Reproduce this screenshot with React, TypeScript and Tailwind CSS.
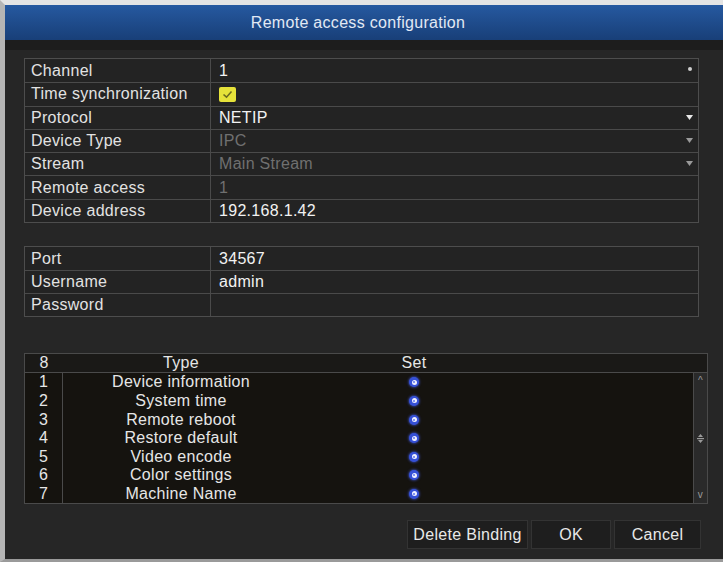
import React from 'react';

type Row = { label: string; value: string; dim?: boolean; arrow?: 'dot' | 'tri'; check?: boolean };

const mainRows: Row[] = [
  { label: 'Channel', value: '1', arrow: 'dot' },
  { label: 'Time synchronization', value: '', check: true },
  { label: 'Protocol', value: 'NETIP', arrow: 'tri' },
  { label: 'Device Type', value: 'IPC', dim: true, arrow: 'tri' },
  { label: 'Stream', value: 'Main Stream', dim: true, arrow: 'tri' },
  { label: 'Remote access', value: '1', dim: true },
  { label: 'Device address', value: '192.168.1.42' },
];

const loginRows: Row[] = [
  { label: 'Port', value: '34567' },
  { label: 'Username', value: 'admin' },
  { label: 'Password', value: '' },
];

const items = [
  'Device information',
  'System time',
  'Remote reboot',
  'Restore default',
  'Video encode',
  'Color settings',
  'Machine Name',
];

const Check = () => (
  <span className="flex h-[15px] w-[17px] items-center justify-center rounded-[2px] bg-[#e6e23a]">
    <svg width="11" height="9" viewBox="0 0 11 9">
      <path d="M1.5 4.5 L4.5 7.2 L9.5 1.5" stroke="#6b6a20" strokeWidth="1.6" fill="none" />
    </svg>
  </span>
);

const FieldTable = ({ rows, rowH }: { rows: Row[]; rowH: string }) => (
  <div className="mx-[24px] border border-[#4d4d4d] bg-[#232323]">
    {rows.map((r, i) => (
      <div
        key={r.label}
        className={`flex items-center ${rowH} ${i > 0 ? 'border-t border-[#4a4a4a]' : ''}`}
      >
        <div className="flex h-full w-[186px] items-center border-r border-[#4a4a4a] pl-[6px] text-[#e2e2e2]">
          {r.label}
        </div>
        <div className="relative flex h-full flex-1 items-center pl-[8px]">
          {r.check ? (
            <Check />
          ) : (
            <span className={r.dim ? 'text-[#707070]' : 'text-[#f2f2f2]'}>{r.value}</span>
          )}
          {r.arrow === 'dot' && (
            <span className="absolute right-[6px] top-[8px] h-[4px] w-[4px] rounded-full bg-[#cfcfcf]" />
          )}
          {r.arrow === 'tri' && (
            <svg className="absolute right-[5px] top-[8px]" width="7" height="6" viewBox="0 0 7 6">
              <path d="M0 0 L7 0 L3.5 5 Z" fill={r.dim ? '#9a9a9a' : '#e8e8e8'} />
            </svg>
          )}
        </div>
      </div>
    ))}
  </div>
);

const SetIcon = () => (
  <span className="flex h-[10px] w-[10px] items-center justify-center rounded-full bg-[#3550d6] shadow-[0_0_3px_#4a66ff]">
    <span className="flex h-[5px] w-[5px] items-center justify-center rounded-full bg-[#eef0ff]">
      <span className="h-[2px] w-[2px] rounded-full bg-[#6077f0]" />
    </span>
  </span>
);

const btn = 'h-[29px] border border-[#333] bg-[#1e1e1e] text-[16px] tracking-[0.3px] text-[#e8e8e8]';

const App: React.FC = () => {
  return (
    <div
      className="flex h-[562px] w-[723px] flex-col border-t-[5px] border-b-[3px] border-l-[5px] border-t-[#e4e4e4] border-b-[#9a9a9a] border-l-[#b5b5b5] bg-[#262626] text-[16px] tracking-[0.3px]"
      style={{ fontFamily: '"Liberation Sans", Arial, sans-serif' }}
    >
      <div className="flex h-[35px] items-center justify-center pr-[12px] bg-gradient-to-b from-[#2659a0] to-[#183f78] text-[16px] text-[#e2e9f4]">
        Remote access configuration
      </div>
      <div className="h-[10px] bg-[#1d1d1d]" />

      <div className="mt-[8px] -ml-[5px]">
        <FieldTable rows={mainRows} rowH="h-[23.3px]" />
      </div>

      <div className="mt-[23px] -ml-[5px]">
        <FieldTable rows={loginRows} rowH="h-[23px]" />
      </div>

      <div className="mx-[19px] mt-[36px] mr-[15px] border border-[#4a4a4a] bg-[#15130f] text-[#e6e6e6]">
        <div className="flex h-[19px] items-center border-b border-[#4a4a4a] bg-[#1a1917]">
          <div className="w-[38px] text-center">8</div>
          <div className="w-[236px] text-center">Type</div>
          <div className="w-[230px] text-center">Set</div>
        </div>
        <div className="flex">
          <div className="flex-1">
            {items.map((t, i) => (
              <div key={t} className="flex h-[18.6px] items-center">
                <div className="flex h-full w-[38px] items-center justify-center border-r border-[#4a4a4a]">
                  {i + 1}
                </div>
                <div className="w-[236px] text-center">{t}</div>
                <div className="flex w-[230px] justify-center">
                  <SetIcon />
                </div>
              </div>
            ))}
          </div>
          <div className="flex w-[14px] flex-col items-center justify-between border-l border-[#4a4a4a] bg-[#2a2a2a] py-[2px] text-[10px] text-[#9a9a9a]">
            <span className="leading-[12px]">^</span>
            <svg width="9" height="9" viewBox="0 0 9 9">
              <path d="M4.5 0 L7 3 L2 3 Z M2 6 L7 6 L4.5 9 Z" fill="#9a9a9a" />
              <rect x="1" y="4" width="7" height="1.2" fill="#9a9a9a" />
            </svg>
            <span className="leading-[12px]">v</span>
          </div>
        </div>
      </div>

      <div className="mt-[16px] flex justify-end gap-[3px] pr-[22px]">
        <button className={`${btn} w-[121px]`}>Delete Binding</button>
        <button className={`${btn} w-[80px]`}>OK</button>
        <button className={`${btn} w-[87px]`}>Cancel</button>
      </div>
    </div>
  );
};

export default App;
